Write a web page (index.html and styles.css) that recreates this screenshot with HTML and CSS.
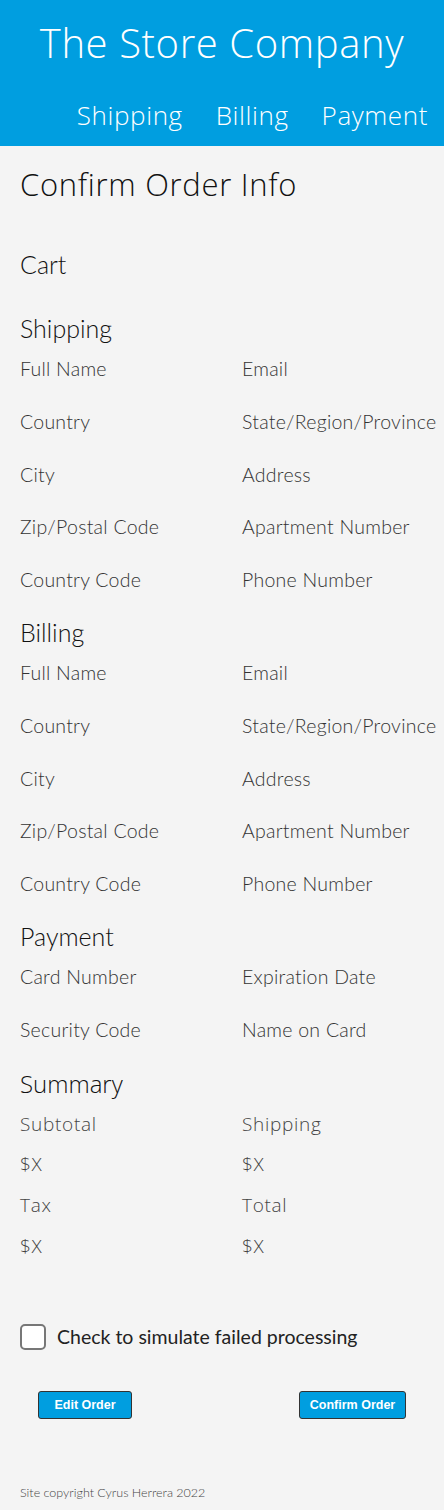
FILE: index.html
```html
<!DOCTYPE html>
<html lang="en">
<head>
<meta charset="utf-8">
<title>Confirm Order Info</title>
<link rel="stylesheet" href="styles.css">
</head>
<body>
<header class="site-header">
  <h1 class="brand">The Store Company</h1>
  <nav class="nav">
    <a class="nav-link" href="#">Shipping</a>
    <a class="nav-link" href="#">Billing</a>
    <a class="nav-link" href="#">Payment</a>
  </nav>
</header>
<main class="content">
  <h2 class="page-title">Confirm Order Info</h2>

  <section class="cart">
    <h3 class="section-title">Cart</h3>
  </section>

  <section class="block">
    <h3 class="section-title">Shipping</h3>
    <div class="fields">
      <div class="field">Full Name</div><div class="field">Email</div>
      <div class="field">Country</div><div class="field">State/Region/Province</div>
      <div class="field">City</div><div class="field">Address</div>
      <div class="field">Zip/Postal Code</div><div class="field">Apartment Number</div>
      <div class="field">Country Code</div><div class="field">Phone Number</div>
    </div>
  </section>

  <section class="block">
    <h3 class="section-title">Billing</h3>
    <div class="fields">
      <div class="field">Full Name</div><div class="field">Email</div>
      <div class="field">Country</div><div class="field">State/Region/Province</div>
      <div class="field">City</div><div class="field">Address</div>
      <div class="field">Zip/Postal Code</div><div class="field">Apartment Number</div>
      <div class="field">Country Code</div><div class="field">Phone Number</div>
    </div>
  </section>

  <section class="block">
    <h3 class="section-title">Payment</h3>
    <div class="fields">
      <div class="field">Card Number</div><div class="field">Expiration Date</div>
      <div class="field">Security Code</div><div class="field">Name on Card</div>
    </div>
  </section>

  <section class="block block-summary">
    <h3 class="section-title summary-title">Summary</h3>
    <div class="summary">
      <div class="sum">Subtotal</div><div class="sum">Shipping</div>
      <div class="sum">$X</div><div class="sum">$X</div>
      <div class="sum">Tax</div><div class="sum">Total</div>
      <div class="sum">$X</div><div class="sum">$X</div>
    </div>
  </section>

  <label class="check">
    <span class="check-box"></span>
    <span class="check-text">Check to simulate failed processing</span>
  </label>

  <div class="actions">
    <button class="btn btn-edit" type="button">Edit Order</button>
    <button class="btn btn-confirm" type="button">Confirm Order</button>
  </div>

  <footer class="footer">Site copyright Cyrus Herrera 2022</footer>
</main>
</body>
</html>
```
FILE: styles.css
```css
html, body {
  margin: 0;
  padding: 0;
}
body {
  background: #f4f4f4;
  font-family: Lato, "Open Sans", sans-serif;
  color: #222;
  width: 444px;
  height: 1510px;
  overflow: hidden;
}
.site-header {
  background: #009ee0;
  color: #fff;
  height: 146px;
  box-sizing: border-box;
  padding-top: 17px;
}
.brand {
  margin: 0;
  font-family: "Open Sans", sans-serif;
  font-weight: 300;
  font-size: 40px;
  line-height: 52px;
  text-align: center;
  letter-spacing: 0.6px;
}
.nav {
  display: flex;
  justify-content: flex-end;
  gap: 33px;
  padding-right: 16px;
  margin-top: 30px;
}
.nav-link {
  color: #fff;
  text-decoration: none;
  font-family: "Open Sans", sans-serif;
  font-weight: 300;
  font-size: 26px;
  line-height: 32px;
  letter-spacing: 0.6px;
}
.content {
  padding-left: 20px;
}
.page-title {
  margin: 0;
  padding-top: 19px;
  font-family: "Open Sans", sans-serif;
  font-weight: 300;
  font-size: 31px;
  line-height: 38px;
  letter-spacing: 0.7px;
  color: #111;
}
.section-title {
  margin: 0;
  font-weight: 300;
  font-size: 25px;
  line-height: 30px;
  color: #111;
}
.cart {
  margin-top: 46px;
  margin-bottom: 34px;
}
.block {
  margin-top: 26px;
}
.block-summary {
  margin-top: 28px;
}
.fields {
  display: grid;
  grid-template-columns: 222px auto;
  grid-auto-rows: 22px;
  row-gap: 30.75px;
  margin-top: 15px;
}
.field {
  font-weight: 300;
  font-size: 19.5px;
  line-height: 22px;
  letter-spacing: 0.25px;
  color: #333;
  white-space: nowrap;
}
.summary-title {
  font-family: "Open Sans", sans-serif;
  font-size: 24px;
}
.summary {
  display: grid;
  grid-template-columns: 222px auto;
  grid-auto-rows: 22px;
  row-gap: 18.7px;
  margin-top: 14px;
}
.sum {
  font-family: "Open Sans", sans-serif;
  font-weight: 300;
  font-size: 19px;
  line-height: 22px;
  letter-spacing: 0.7px;
  color: #444;
}
.check {
  display: flex;
  align-items: center;
  gap: 11px;
  margin-top: 67px;
}
.check-box {
  width: 22px;
  height: 22px;
  border: 2px solid #777;
  border-radius: 5px;
  background: #fff;
}
.check-text {
  font-size: 19.5px;
  line-height: 26px;
  color: #222;
}
.actions {
  display: flex;
  justify-content: space-between;
  padding: 0 38px 0 18px;
  margin-top: 41px;
}
.btn {
  font-family: "Liberation Sans", Arial, sans-serif;
  font-weight: bold;
  font-size: 12.5px;
  color: #fff;
  background: #009ee0;
  border: 1px solid #333;
  border-radius: 3px;
  height: 28px;
  padding: 0;
}
.btn-edit {
  width: 94px;
}
.btn-confirm {
  width: 107px;
}
.footer {
  margin-top: 66px;
  font-size: 12.5px;
  line-height: 16px;
  font-weight: 300;
  color: #444;
}
```
